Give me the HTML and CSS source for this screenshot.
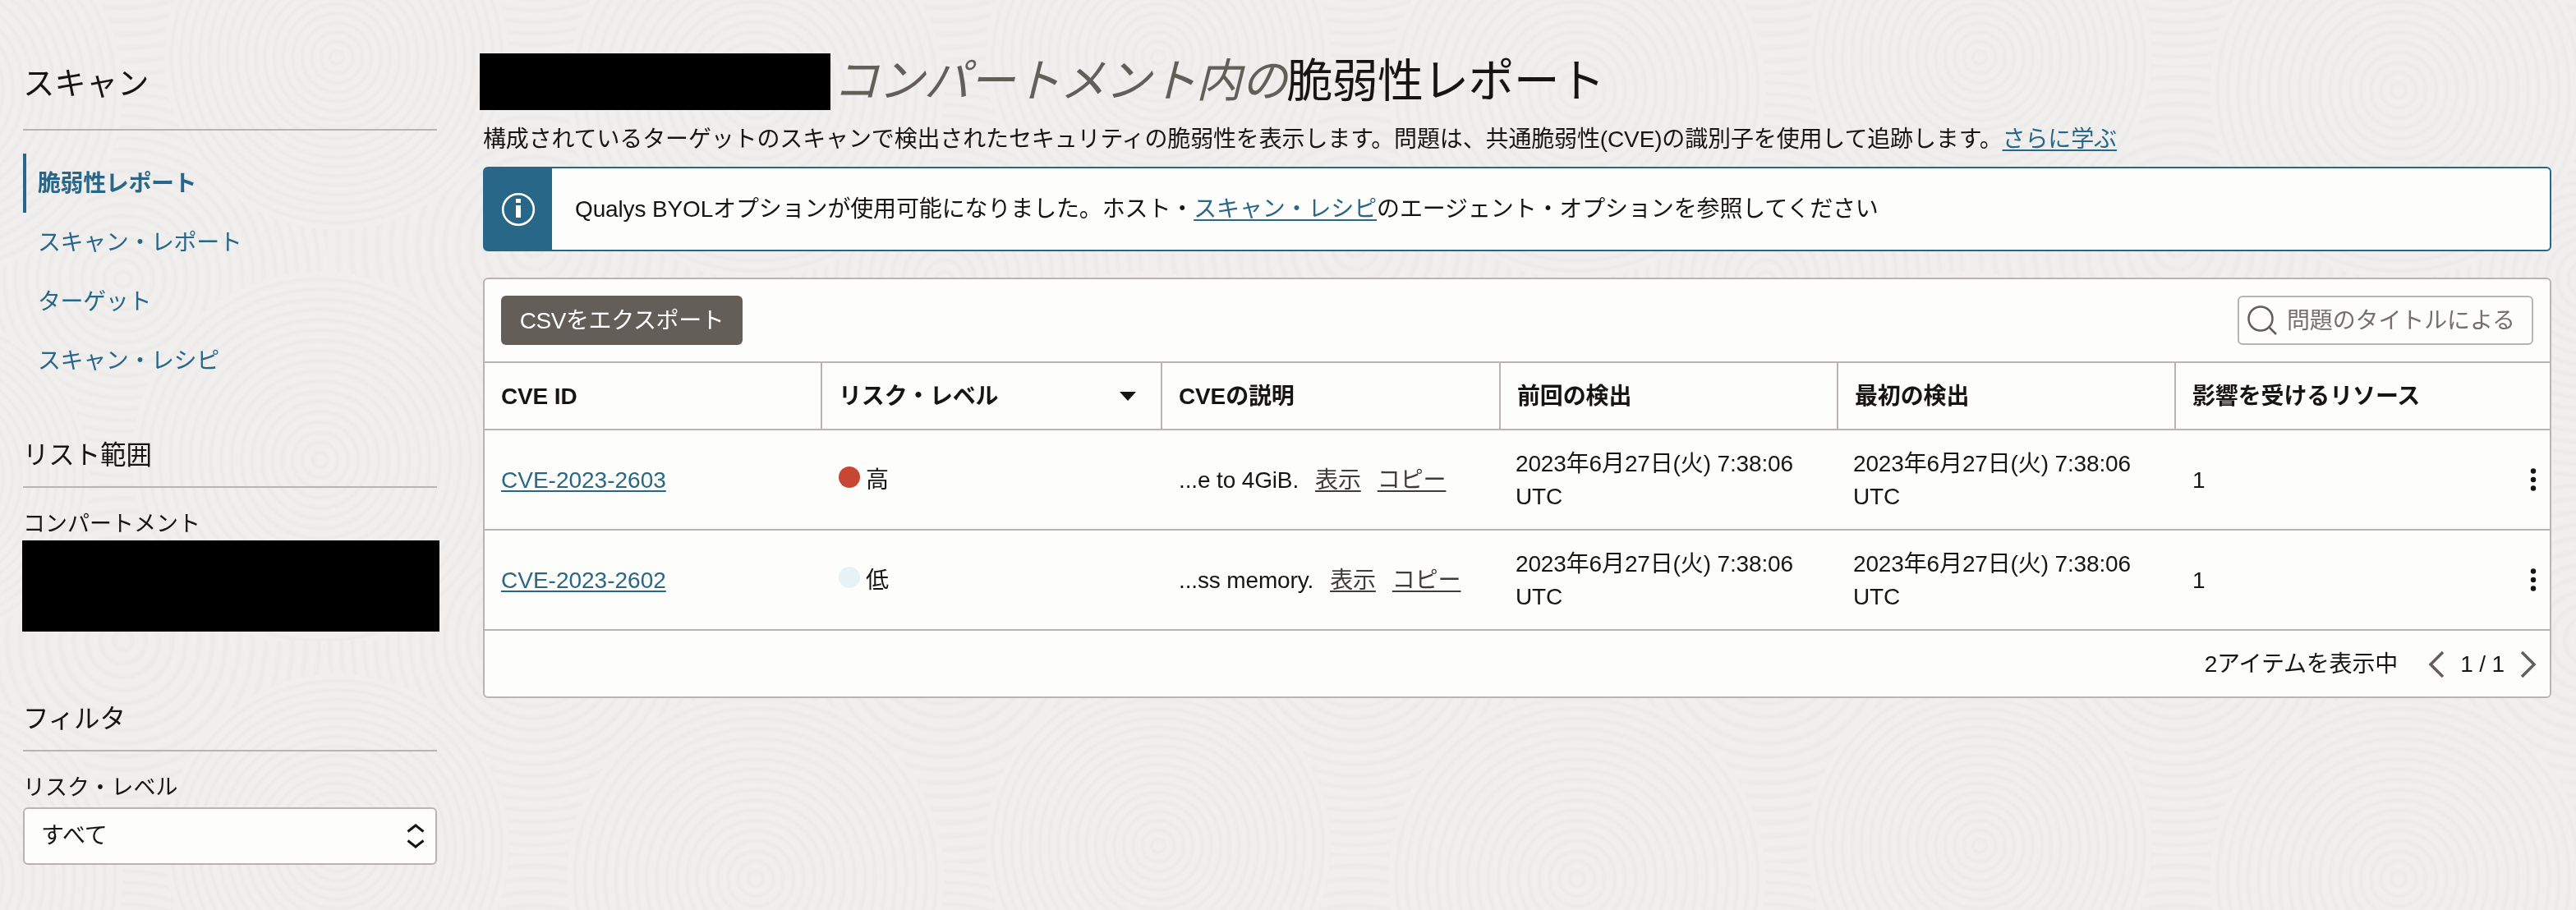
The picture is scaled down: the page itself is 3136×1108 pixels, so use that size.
FILE: index.html
```html
<!DOCTYPE html>
<html lang="ja">
<head>
    <meta charset="UTF-8">
    <meta name="viewport" content="width=device-width, initial-scale=1.0">
    <title>脆弱性レポート</title>
    <link rel="stylesheet" href="styles.css">
</head>
<body>
    <!-- Background texture -->
    <svg class="texture" width="100%" height="100%" aria-hidden="true">
        <defs>
            <radialGradient id="ring" r="0.027" spreadMethod="repeat">
                <stop offset="0" stop-color="#f0efed"/>
                <stop offset="0.4" stop-color="#f0efed"/>
                <stop offset="0.75" stop-color="#ebeae8"/>
                <stop offset="1" stop-color="#f0efed"/>
            </radialGradient>
            <pattern id="waves" width="1000" height="960" patternUnits="userSpaceOnUse" patternTransform="translate(150 -180)">
                <g fill="url(#ring)">
                    <circle cx="0" cy="0" r="300"/>
                    <circle cx="1000" cy="0" r="300"/>
                    <circle cx="0" cy="960" r="300"/>
                    <circle cx="1000" cy="960" r="300"/>
                    <circle cx="500" cy="480" r="300"/>
                    <circle cx="500" cy="0" r="260"/>
                    <circle cx="500" cy="960" r="260"/>
                    <circle cx="0" cy="520" r="250"/>
                    <circle cx="1000" cy="520" r="250"/>
                    <circle cx="260" cy="250" r="210"/>
                    <circle cx="770" cy="290" r="230"/>
                    <circle cx="240" cy="740" r="230"/>
                    <circle cx="760" cy="760" r="200"/>
                </g>
            </pattern>
        </defs>
        <rect width="100%" height="100%" fill="url(#waves)"/>
    </svg>

    <div class="layout">
        <aside class="sidebar">
            <h2 class="sidebar-title">スキャン</h2>
            <nav class="nav">
                <a href="#" class="nav-item active">脆弱性レポート</a>
                <a href="#" class="nav-item">スキャン・レポート</a>
                <a href="#" class="nav-item">ターゲット</a>
                <a href="#" class="nav-item">スキャン・レシピ</a>
            </nav>

            <section class="scope">
                <h3 class="section-title">リスト範囲</h3>
                <div class="label">コンパートメント</div>
                <div class="redacted redacted-scope"></div>
            </section>

            <section class="filter">
                <h3 class="section-title">フィルタ</h3>
                <div class="label">リスク・レベル</div>
                <div class="select">
                    <span>すべて</span>
                    <svg width="22" height="30" viewBox="0 0 22 30" fill="none" stroke="#161513" stroke-width="3">
                        <path d="M1.5 9.5 11 2l9.500 7.500M1.500 20.500 11 28l9.500-7.500"/>
                    </svg>
                </div>
            </section>
        </aside>

        <main class="main">
            <h1 class="page-title">
                <span class="redacted redacted-title"></span><em>コンパートメント内の</em>脆弱性レポート
            </h1>
            <p class="description">構成されているターゲットのスキャンで検出されたセキュリティの脆弱性を表示します。問題は、共通脆弱性(CVE)の識別子を使用して追跡します。<a href="#" class="link">さらに学ぶ</a></p>

            <div class="notice">
                <div class="notice-icon">
                    <svg width="42" height="42" viewBox="0 0 42 42" fill="none">
                        <circle cx="21" cy="21" r="18.800" stroke="#fff" stroke-width="2.600"/>
                        <path d="M18 8h6v5h-6zM18 16h6v15h-6z" fill="#fff"/>
                    </svg>
                </div>
                <p>Qualys BYOLオプションが使用可能になりました。ホスト・<a href="#" class="link">スキャン・レシピ</a>のエージェント・オプションを参照してください</p>
            </div>

            <div class="panel">
                <div class="toolbar">
                    <button class="btn">CSVをエクスポート</button>
                    <label class="search">
                        <svg width="36" height="36" viewBox="0 0 36 36" fill="none" stroke="#645e59" stroke-width="2.500">
                            <circle cx="16" cy="16" r="14.500"/>
                            <path d="M26.500 26.500 35 35"/>
                        </svg>
                        <input type="text" placeholder="問題のタイトルによる">
                    </label>
                </div>

                <table class="table">
                    <colgroup>
                        <col class="col-id">
                        <col class="col-risk">
                        <col class="col-desc">
                        <col class="col-date">
                        <col class="col-date">
                        <col class="col-res">
                        <col class="col-menu">
                    </colgroup>
                    <thead>
                        <tr>
                            <th>CVE ID</th>
                            <th>
                                <div class="sortable">
                                    リスク・レベル
                                    <svg width="20" height="11" viewBox="0 0 20 11"><path d="M0 0h20L10 11z" fill="#161513"/></svg>
                                </div>
                            </th>
                            <th>CVEの説明</th>
                            <th>前回の検出</th>
                            <th>最初の検出</th>
                            <th colspan="2">影響を受けるリソース</th>
                        </tr>
                    </thead>
                    <tbody>
                        <tr>
                            <td><a href="#" class="link cve">CVE-2023-2603</a></td>
                            <td><span class="dot high"></span>高</td>
                            <td class="desc">...e to 4GiB.<a href="#" class="action">表示</a><a href="#" class="action">コピー</a></td>
                            <td>2023年6月27日(火) 7:38:06 UTC</td>
                            <td>2023年6月27日(火) 7:38:06 UTC</td>
                            <td class="count-cell">1</td>
                            <td class="menu">
                                <svg width="8" height="28" viewBox="0 0 8 28" fill="#161513"><circle cx="4" cy="3.500" r="3.200"/><circle cx="4" cy="14" r="3.200"/><circle cx="4" cy="24.500" r="3.200"/></svg>
                            </td>
                        </tr>
                        <tr>
                            <td><a href="#" class="link cve">CVE-2023-2602</a></td>
                            <td><span class="dot low"></span>低</td>
                            <td class="desc">...ss memory.<a href="#" class="action">表示</a><a href="#" class="action">コピー</a></td>
                            <td>2023年6月27日(火) 7:38:06 UTC</td>
                            <td>2023年6月27日(火) 7:38:06 UTC</td>
                            <td class="count-cell">1</td>
                            <td class="menu">
                                <svg width="8" height="28" viewBox="0 0 8 28" fill="#161513"><circle cx="4" cy="3.500" r="3.200"/><circle cx="4" cy="14" r="3.200"/><circle cx="4" cy="24.500" r="3.200"/></svg>
                            </td>
                        </tr>
                    </tbody>
                </table>

                <div class="pager">
                    <span class="count">2アイテムを表示中</span>
                    <svg width="20" height="34" viewBox="0 0 20 34" fill="none" stroke="#645e59" stroke-width="3.500"><path d="M18 2 3 17l15 15"/></svg>
                    <span class="page">1 / 1</span>
                    <svg width="20" height="34" viewBox="0 0 20 34" fill="none" stroke="#645e59" stroke-width="3.500"><path d="m2 2 15 15L2 32"/></svg>
                </div>
            </div>
        </main>
    </div>
</body>
</html>
```

FILE: styles.css
```css
:root {
    --bg: #f0efed;
    --card: #fdfdfb;
    --text: #161513;
    --text-light: #645e59;
    --border: #bab4ae;
    --blue: #286788;
}

* {
    margin: 0;
    padding: 0;
    box-sizing: border-box;
}

body {
    background: var(--bg);
    color: var(--text);
    font-family: "Liberation Sans", "Noto Sans CJK JP", sans-serif;
    font-size: 28px;
    line-height: 40px;
    letter-spacing: -0.14px;
    overflow: hidden;
}

svg {
    display: block;
    flex: none;
}

.texture {
    position: fixed;
    inset: 0;
    z-index: -1;
}

.layout {
    display: flex;
    height: 1108px;
    padding-right: 30px;
}

.redacted {
    background: #000;
}

.link {
    color: var(--blue);
    text-decoration: underline;
    text-decoration-thickness: 2px;
    text-underline-offset: 3px;
}

/* Sidebar */
.sidebar {
    width: 504px;
    margin-left: 28px;
    flex: none;
}

.sidebar-title {
    height: 159px;
    padding-top: 82px;
    font-size: 38.5px;
    font-weight: 400;
    border-bottom: 2px solid var(--border);
}

.nav {
    margin-top: 28px;
}

.nav-item {
    display: block;
    height: 72px;
    padding-left: 14px;
    border-left: 4px solid transparent;
    line-height: 74px;
    letter-spacing: -0.4px;
    color: var(--blue);
    text-decoration: none;
}

.nav-item.active {
    border-left-color: var(--blue);
    font-weight: 700;
}

.scope {
    height: 321px;
    padding-top: 57px;
}

.section-title {
    height: 62px;
    padding-top: 2px;
    font-size: 31.5px;
    font-weight: 400;
    border-bottom: 2px solid var(--border);
}

.label {
    margin-top: 24px;
    font-size: 27px;
    letter-spacing: 0;
}

.redacted-scope {
    width: 508px;
    height: 111px;
    margin-left: -1px;
}

.filter {
    padding-top: 57px;
}

.select {
    display: flex;
    align-items: center;
    justify-content: space-between;
    height: 70px;
    margin-top: 4px;
    padding: 0 13px 0 20px;
    background: var(--card);
    border: 2px solid var(--border);
    border-radius: 6px;
}

/* Main */
.main {
    flex: 1;
    margin-left: 56px;
}

.page-title {
    display: flex;
    height: 134px;
    padding-top: 65px;
    font-size: 56px;
    font-weight: 400;
    line-height: 68px;
    letter-spacing: -0.75px;
    white-space: nowrap;
}

.page-title em {
    margin-left: 3px;
    color: var(--text-light);
}

.redacted-title {
    width: 427px;
    height: 69px;
    margin-left: -4px;
}

.description {
    height: 69px;
    padding-top: 16px;
}

.notice {
    display: flex;
    height: 103px;
    background: var(--card);
    border: 2px solid var(--blue);
    border-radius: 6px;
}

.notice-icon {
    display: flex;
    align-items: center;
    justify-content: center;
    width: 82px;
    background: var(--blue);
}

.notice p {
    padding: 30px 28px;
}

.panel {
    margin-top: 32px;
    background: var(--card);
    border: 2px solid var(--border);
    border-radius: 6px;
}

.toolbar {
    display: flex;
    justify-content: space-between;
    height: 102px;
    padding: 20px;
    border-bottom: 2px solid var(--border);
}

.btn {
    width: 294px;
    height: 60px;
    padding-top: 1px;
    background: var(--text-light);
    color: #fff;
    border: none;
    border-radius: 6px;
    font: inherit;
    letter-spacing: -0.4px;
}

.search {
    display: flex;
    align-items: center;
    gap: 12px;
    width: 360px;
    height: 60px;
    padding-left: 10px;
    border: 2px solid var(--border);
    border-radius: 6px;
}

.search input {
    width: 290px;
    padding-top: 1px;
    border: none;
    outline: none;
    background: transparent;
    font: inherit;
    letter-spacing: inherit;
}

.search input::placeholder {
    color: #75706b;
}

.table {
    width: 100%;
    table-layout: fixed;
    border-collapse: separate;
    border-spacing: 0;
}

.col-id { width: 409px; }
.col-risk { width: 414px; }
.col-desc { width: 412px; }
.col-date { width: 411px; }
.col-menu { width: 40px; }

.table th {
    height: 82px;
    padding: 1px 18px 0 20px;
    border-left: 2px solid var(--border);
    border-bottom: 2px solid var(--border);
    text-align: left;
    font-weight: 700;
}

.table th:first-child {
    border-left: none;
}

.table td {
    height: 122px;
    padding: 2px 20px 0;
    border-bottom: 2px solid var(--border);
}

.table td.desc,
.table td.count-cell {
    padding-left: 22px;
}

.table td.menu {
    padding: 0 16px;
}

.cve {
    letter-spacing: 0;
}

.sortable {
    display: flex;
    align-items: center;
    justify-content: space-between;
    padding-right: 12px;
}

.dot {
    display: inline-block;
    width: 26px;
    height: 26px;
    margin: 0 7px 0 2px;
    border-radius: 50%;
}

.dot.high {
    background: #c74634;
}

.dot.low {
    background: #e6f2f5;
}

.action {
    margin-left: 20px;
    color: #403c38;
    text-decoration: underline;
    text-decoration-thickness: 2px;
    text-underline-offset: 3px;
}

.pager {
    display: flex;
    align-items: center;
    justify-content: flex-end;
    height: 80px;
    padding: 2px 16px 0 0;
}

.count {
    margin-right: 37px;
}

.page {
    margin: 0 19px;
}
```
